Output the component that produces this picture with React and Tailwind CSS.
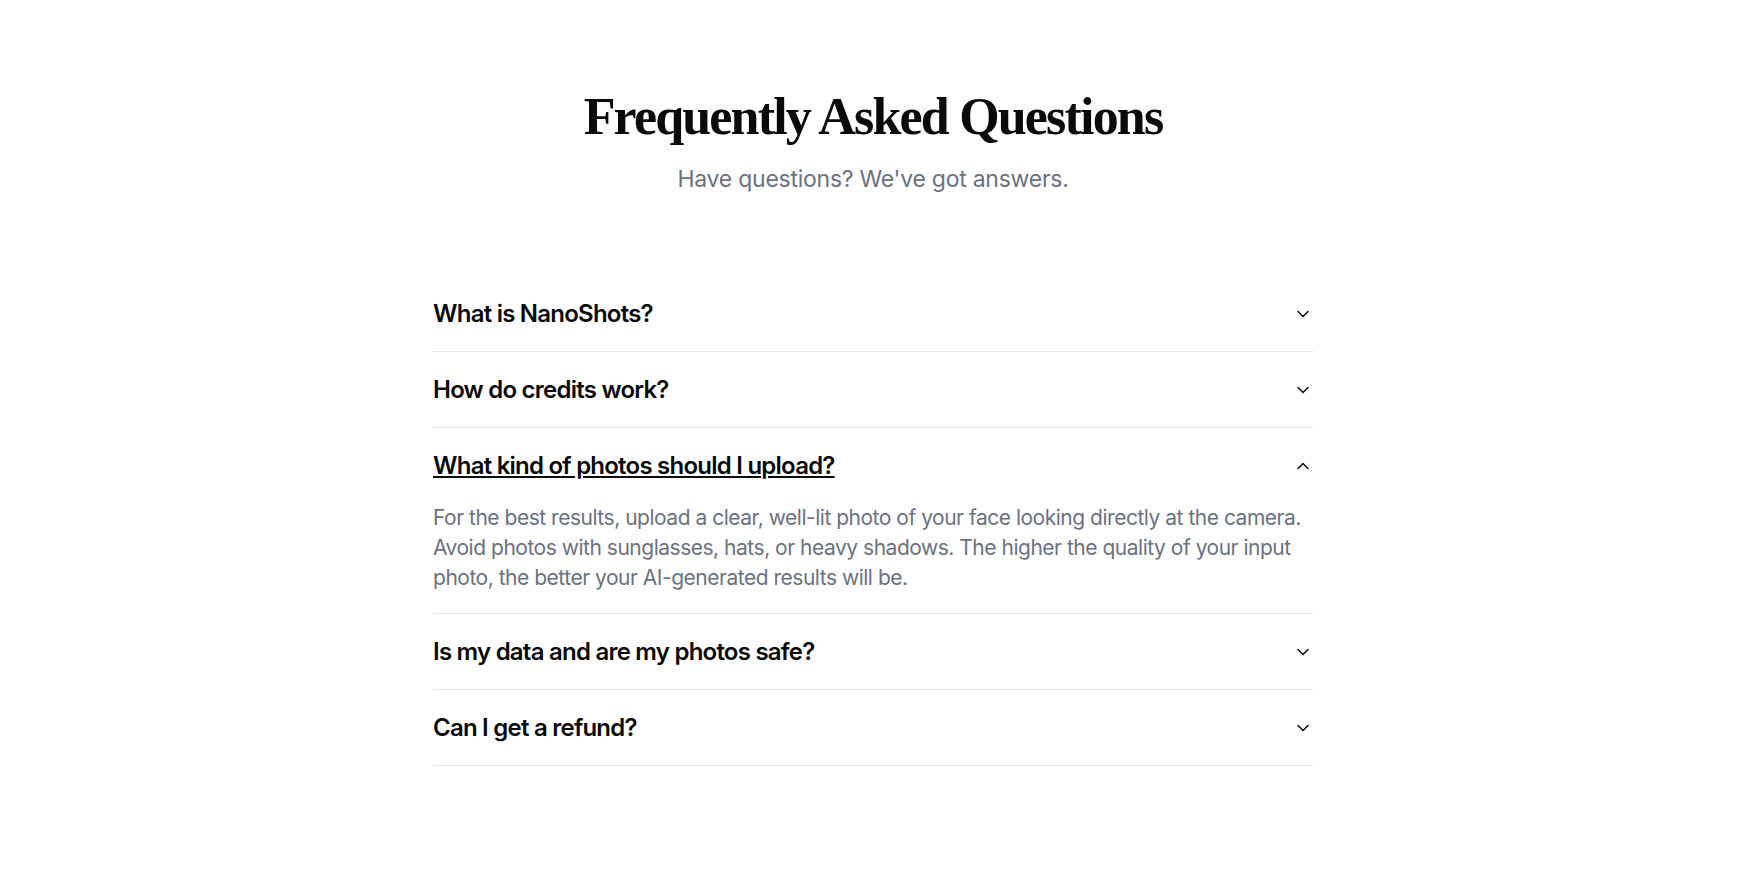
import React, { useState } from "react";
import { ChevronDown, ChevronUp } from "lucide-react";

const faqs = [
  {
    q: "What is NanoShots?",
    a: "NanoShots is an AI photo studio that turns a single selfie into professional, studio-quality portraits in minutes.",
  },
  {
    q: "How do credits work?",
    a: "Each generation uses one credit. Credits never expire and can be topped up at any time from your dashboard.",
  },
  {
    q: "What kind of photos should I upload?",
    a: "For the best results, upload a clear, well-lit photo of your face looking directly at the camera. Avoid photos with sunglasses, hats, or heavy shadows. The higher the quality of your input photo, the better your AI-generated results will be.",
  },
  {
    q: "Is my data and are my photos safe?",
    a: "Yes. Your photos are encrypted, only used to generate your results, and deleted automatically after processing.",
  },
  {
    q: "Can I get a refund?",
    a: "If you're not happy with your results, contact our support team within 7 days and we'll make it right.",
  },
];

const FaqItem = ({ item, open, onToggle }) => (
  <div className="border-b border-[#e5e7eb]">
    <button
      onClick={onToggle}
      className="group w-full flex items-center justify-between py-6 text-left cursor-pointer"
    >
      <span
        className={`text-2xl leading-[27px] font-semibold tracking-[-0.032em] text-[#0a0a0a] ${
          open ? "underline" : "group-hover:underline"
        }`}
      >
        {item.q}
      </span>
      {open ? (
        <ChevronUp className="w-5 h-5 text-[#0a0a0a] shrink-0" strokeWidth={1.75} />
      ) : (
        <ChevronDown className="w-5 h-5 text-[#0a0a0a] shrink-0" strokeWidth={1.75} />
      )}
    </button>
    {open && (
      <div className="pb-5 text-[21px] leading-[30px] tracking-[-0.023em] text-[#6b7280]">
        {item.a}
      </div>
    )}
  </div>
);

export default function App() {
  const [openIndex, setOpenIndex] = useState(2);

  return (
    <div className="min-h-screen bg-white font-['Inter','Noto_Sans',sans-serif] pr-[6px]">
      <section className="pt-[91px] pb-24">
        <div className="text-center">
          <h1 className="text-[52px] leading-none font-bold tracking-[-0.035em] text-[#0a0a0a] font-['Liberation_Serif','DejaVu_Serif',serif]">
            Frequently Asked Questions
          </h1>
          <p className="mt-[22px] text-[23px] leading-7 tracking-[-0.011em] text-[#6b7280]">
            Have questions? We've got answers.
          </p>
        </div>

        <div className="mx-auto w-[880px] mt-[83px]">
          {faqs.map((item, i) => (
            <FaqItem
              key={i}
              item={item}
              open={openIndex === i}
              onToggle={() => setOpenIndex(openIndex === i ? -1 : i)}
            />
          ))}
        </div>
      </section>
    </div>
  );
}
